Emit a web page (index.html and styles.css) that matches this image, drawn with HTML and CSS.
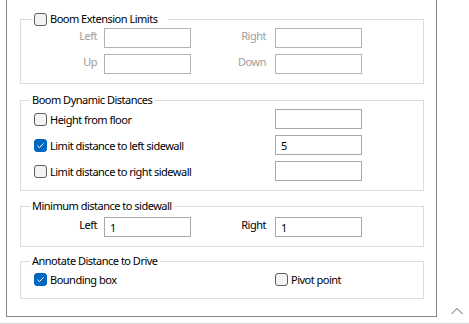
FILE: index.html
```html
<!DOCTYPE html>
<html lang="en">
<head>
    <meta charset="UTF-8">
    <title>Boom Settings</title>
    <link rel="stylesheet" href="styles.css">
</head>
<body>
    <div class="window">
        <div class="panel">
            <fieldset class="group group-ext">
                <legend class="legend-check">
                    <label class="check"><input type="checkbox"><span>Boom Extension Limits</span></label>
                </legend>
                <div class="grid">
                    <span class="lbl off">Left</span>
                    <input type="text" class="box" disabled>
                    <span class="lbl lbl-right off">Right</span>
                    <input type="text" class="box" disabled>
                    <span class="lbl off">Up</span>
                    <input type="text" class="box" disabled>
                    <span class="lbl lbl-right off">Down</span>
                    <input type="text" class="box" disabled>
                </div>
            </fieldset>

            <fieldset class="group group-dyn">
                <legend>Boom Dynamic Distances</legend>
                <div class="grid">
                    <label class="check wide"><input type="checkbox"><span>Height from floor</span></label>
                    <input type="text" class="box">
                    <label class="check wide"><input type="checkbox" checked><span>Limit distance to left sidewall</span></label>
                    <input type="text" class="box" value="5">
                    <label class="check wide"><input type="checkbox"><span>Limit distance to right sidewall</span></label>
                    <input type="text" class="box">
                </div>
            </fieldset>

            <fieldset class="group group-min">
                <legend>Minimum distance to sidewall</legend>
                <div class="grid">
                    <span class="lbl">Left</span>
                    <input type="text" class="box" value="1">
                    <span class="lbl lbl-right">Right</span>
                    <input type="text" class="box" value="1">
                </div>
            </fieldset>

            <fieldset class="group group-ann">
                <legend>Annotate Distance to Drive</legend>
                <div class="grid">
                    <label class="check span3"><input type="checkbox" checked><span>Bounding box</span></label>
                    <label class="check pivot"><input type="checkbox"><span>Pivot point</span></label>
                </div>
            </fieldset>
        </div>
        <div class="scroll">
            <svg width="14" height="8" viewBox="0 0 14 8"><polyline points="1.5,7 7,1.5 12.5,7" fill="none" stroke="#606060" stroke-width="1"/></svg>
        </div>
    </div>
</body>
</html>
```
FILE: styles.css
```css
body {
    margin: 0;
    font-family: "Noto Sans", sans-serif;
    font-size: 11px;
    letter-spacing: -0.5px;
    color: #000;
    background: #fff;
}

.window {
    display: flex;
    height: 323px;
    border-bottom: 1px solid #d9d9d9;
}

.panel {
    margin-left: 6px;
    width: 429px;
    height: 316px;
    border: 1px solid #858585;
    border-top: none;
}

.group {
    box-sizing: border-box;
    width: 404px;
    margin: 0 0 0 13px;
    padding: 0 0 9px 0;
    border: 1px solid #dcdcdc;
}

.group legend {
    margin-left: 9px;
    padding: 0 2px;
    line-height: 16px;
    height: 16px;
}

.group .legend-check {
    margin-left: 12px;
    padding: 0 11px 0 1px;
}

.group-ext { margin-top: 11px; }
.group-dyn { margin-top: 8px; }
.group-min { margin-top: 7px; }
.group-ann { margin-top: 6px; }

.grid {
    display: grid;
    grid-template-columns: 83px 87px 84px 87px;
    grid-auto-rows: 20px;
    row-gap: 6px;
    align-items: center;
    margin-top: 1px;
}

.group-min .grid { margin-top: 3px; }
.group-ann .grid { margin-top: 0; }

.lbl {
    text-align: right;
    padding-right: 7px;
    line-height: 20px;
    align-self: start;
    margin-top: -2px;
}

.lbl-right { padding-right: 9px; }

.off { color: #9d9d9d; }

.box {
    box-sizing: border-box;
    width: 87px;
    height: 20px;
    margin: 0;
    padding: 0 5px;
    border: 1px solid #a9a9a9;
    background: #fff;
    font: inherit;
    font-size: 11px;
    color: #000;
    outline: none;
}

.box:disabled {
    border-color: #b3b3b3;
    background: #fff;
}

.check {
    display: flex;
    align-items: center;
    gap: 3px;
}

.wide, .span3 {
    grid-column: 1 / 4;
    margin-left: 13px;
}

.pivot { grid-column: 4; }

.check input {
    appearance: none;
    -webkit-appearance: none;
    box-sizing: border-box;
    width: 13px;
    height: 13px;
    margin: 0;
    border: 1px solid #5d5d5d;
    border-radius: 3px;
    background: #f3f3f3;
    flex: none;
}

.check input:checked {
    border-color: #0067c0;
    background: #0067c0 url("data:image/svg+xml,%3Csvg xmlns='http://www.w3.org/2000/svg' width='11' height='11' viewBox='0 0 11 11'%3E%3Cpolyline points='2.5,5.8 4.5,7.6 8.5,3.4' fill='none' stroke='%23fff' stroke-width='1'/%3E%3C/svg%3E") center / 11px 11px no-repeat;
}

.scroll {
    flex: 1;
    display: flex;
    justify-content: center;
    align-items: flex-end;
    padding-bottom: 8px;
    padding-left: 8px;
}
```
